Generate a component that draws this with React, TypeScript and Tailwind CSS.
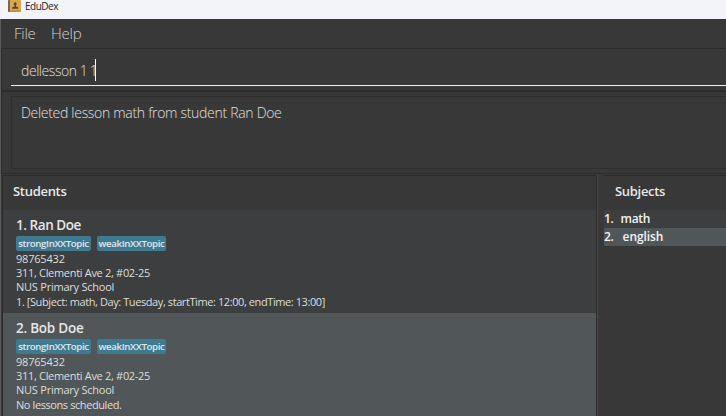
type Student = {
  id: number;
  name: string;
  nameTracking: string;
  lesson: string;
  lessonTracking: string;
  selected: boolean;
};

const tags = [
  { label: "strongInXXTopic", width: "w-[75px]" },
  { label: "weakInXXTopic", width: "w-[69px]" },
];

const students: Student[] = [
  {
    id: 1,
    name: "Ran Doe",
    nameTracking: "tracking-[-0.45px]",
    lesson: "1. [Subject: math, Day: Tuesday, startTime: 12:00, endTime: 13:00]",
    lessonTracking: "tracking-[-0.41px]",
    selected: false,
  },
  {
    id: 2,
    name: "Bob Doe",
    nameTracking: "tracking-[-0.25px]",
    lesson: "No lessons scheduled.",
    lessonTracking: "tracking-[-0.41px]",
    selected: true,
  },
];

function AppIcon() {
  return (
    <svg className="h-[12px] w-[13px]" viewBox="0 0 13 12">
      <rect x="0" y="0" width="13" height="12" rx="1" fill="#d9a84e" />
      <rect x="0" y="0" width="2" height="12" rx="0.8" fill="#7b6450" />
      <rect x="2.500" y="10.500" width="10" height="1" fill="#a87a33" />
      <circle cx="7.200" cy="3.800" r="1.500" fill="#5a4327" />
      <path d="M6.500 4.800h1.400v1.700l2.300.8v1.500h-6V7.300l2.300-.8z" fill="#5a4327" />
    </svg>
  );
}

function StudentCard({ s }: { s: Student }) {
  return (
    <div className={`h-[103px] shrink-0 pl-[13px] pt-[6px] ${s.selected ? "bg-[#515658]" : "bg-[#3c3e3f]"}`}>
      <div className={`h-[20px] text-[13.500px] font-semibold leading-[19px] text-[#e6e6e6] ${s.nameTracking}`}>
        {s.id}. {s.name}
      </div>
      <div className="flex gap-[6px]">
        {tags.map((t) => (
          <span key={t.label} className={`h-[15px] rounded-[2px] bg-[#3e7b91] text-center text-[9.700px] font-semibold leading-[15px] tracking-[-0.38px] text-[#e2e6e8] ${t.width}`}>
            {t.label}
          </span>
        ))}
      </div>
      <div className="whitespace-nowrap pt-[0.600px] text-[11px] leading-[14.400px] text-[#dedede]">
        <div className="tracking-[-0.2px]">98765432</div>
        <div className="tracking-[-0.31px]">311, Clementi Ave 2, #02-25</div>
        <div className="tracking-[-0.23px]">NUS Primary School</div>
        <div className={s.lessonTracking}>{s.lesson}</div>
      </div>
    </div>
  );
}

export default function App() {
  return (
    <div className="flex h-[416px] w-[726px] flex-col overflow-hidden bg-[#383838] font-['Open_Sans','Noto_Sans',sans-serif]">
      <header className="flex h-[19px] shrink-0 items-start gap-[4px] bg-[#f3f4fa] pl-[8px]">
        <AppIcon />
        <span className="text-[10px] leading-[13px] tracking-[-0.5px] text-[#222222]">EduDex</span>
      </header>
      <div className="flex min-h-0 flex-1 flex-col border-l border-[#5a5a5a]">
        <nav className="flex h-[29px] shrink-0 gap-[15px] pl-[13px] text-[15px] font-light leading-[29px] tracking-[-0.25px] text-[#d2d2d2]">
          <span className="w-[22px]">File</span>
          <span>Help</span>
        </nav>
        <section className="h-[43px] shrink-0 border border-r-0 border-[#2c2c2c] pl-[9px] pt-[6px]">
          <div className="flex h-[31px] items-center border-b border-[#eeeeee] pl-[10px] text-[14px] font-light leading-[21px] text-[#e0e0e0]">
            <span className="whitespace-pre tracking-[-0.44px]">
              dellesson <span className="tracking-[-1.200px]">1</span> <span className="tracking-[-2.800px]">1</span>
            </span>
            <span className="h-[22px] w-px bg-white" />
          </div>
        </section>
        <section className="h-[83px] shrink-0 border-b border-l border-t border-[#2c2c2c] pl-[9px] pt-[4px]">
          <div className="h-[73px] border border-r-0 border-[#2e2e2e] pl-[9px] pt-[5px] text-[14px] font-light leading-[22px] tracking-[-0.3px] text-[#e0e0e0]">
            Deleted lesson math from student Ran Doe
          </div>
        </section>
        <main className="flex min-h-0 flex-1 pl-[1px] pt-[1px]">
          <section className="flex w-[595px] shrink-0 flex-col border-l border-t border-[#2b2b2b]">
            <h2 className="h-[34px] shrink-0 pl-[10px] text-[13px] font-semibold leading-[31px] tracking-[-0.3px] text-[#e8e8e8]">Students</h2>
            {students.map((s) => (
              <StudentCard key={s.id} s={s} />
            ))}
          </section>
          <div className="w-[7px] shrink-0 border-l border-[#484848] shadow-[-1px_0_0_#2b2b2b]" />
          <section className="flex-1 border-t border-[#2b2b2b]">
            <h2 className="h-[34px] pl-[11px] text-[13px] font-semibold leading-[31px] tracking-[-0.3px] text-[#e8e8e8]">Subjects</h2>
            <div className="text-[12px] font-semibold leading-[18px] text-[#f4f4f4]">
              <div className="flex h-[18px] gap-[7px] bg-[#3c3e3f]">
                <span className="tracking-[-0.3px]">1.</span>
                <span className="tracking-[-0.3px]">math</span>
              </div>
              <div className="flex h-[18px] gap-[9px] bg-[#515658]">
                <span className="tracking-[-0.3px]">2.</span>
                <span className="tracking-[-0.1px]">english</span>
              </div>
            </div>
          </section>
        </main>
      </div>
    </div>
  );
}
